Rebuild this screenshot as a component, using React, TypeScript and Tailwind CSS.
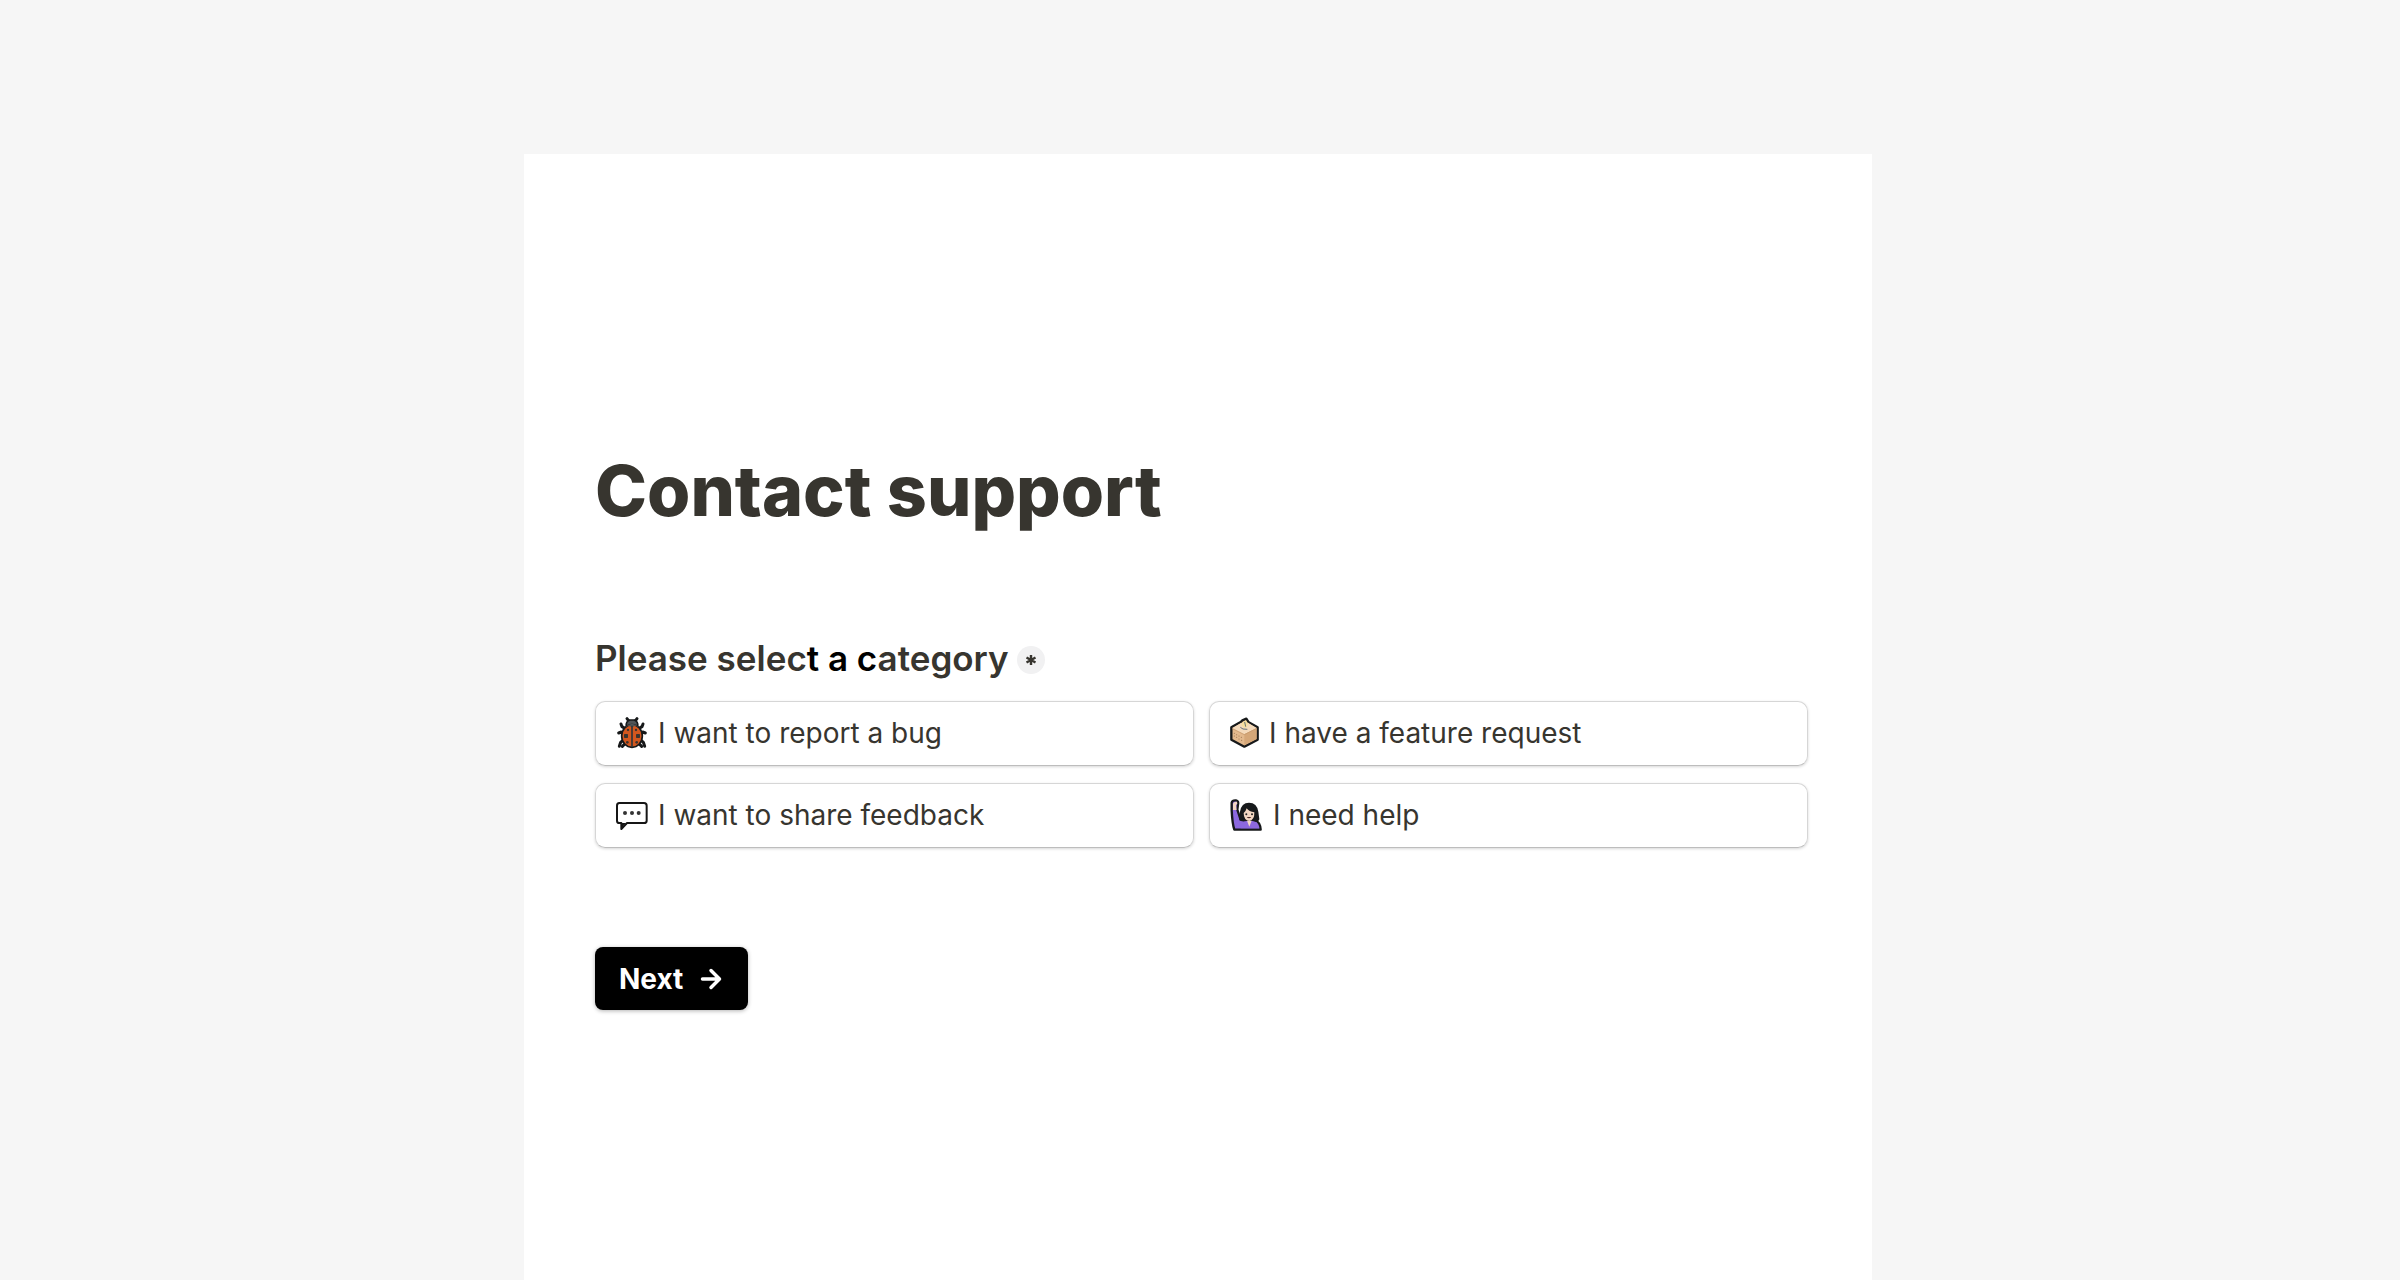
import React from 'react';

const BugIcon: React.FC = () => (
    <svg width="32" height="33" viewBox="33 36 96 99" className="shrink-0 overflow-visible" aria-hidden="true">
        <g fill="none" stroke="#17191a" strokeWidth="9" strokeLinecap="round" strokeLinejoin="round">
            <path d="M74 50 L70 46 L66 41 M88 50 L92 46 L96 41" />
            <path d="M60 70 L51 65 L48 57 M102 70 L111 65 L114 57" />
            <path d="M56 88 L49 81 L41 84 M106 88 L113 81 L121 84" />
            <path d="M56 104 L47 112 L43 124 M106 104 L115 112 L119 124" />
            <path d="M62 114 L52 124 M100 114 L110 124" />
        </g>
        <path d="M64 64 Q62 48 75 45 H87 Q100 48 98 64 Z" fill="#505557" stroke="#17191a" strokeWidth="5" />
        <ellipse cx="81" cy="93" rx="31" ry="34" fill="#d2571e" stroke="#17191a" strokeWidth="5" />
        <path d="M60 67 Q81 46 102 67 L91 62 L81 67 L71 62 Z" fill="#505557" />
        <path d="M81 62 V126" stroke="#303538" strokeWidth="5" />
        <g fill="#3a342f">
            <rect x="57" y="87" width="12" height="12" rx="2" />
            <rect x="93" y="87" width="12" height="12" rx="2" />
            <circle cx="69" cy="75" r="3.5" />
            <circle cx="93" cy="75" r="3.5" />
            <circle cx="67" cy="112" r="4" />
            <circle cx="95" cy="112" r="4" />
        </g>
    </svg>
);

const BoxIcon: React.FC = () => (
    <svg width="29" height="33" viewBox="30 36 87 99" className="shrink-0 overflow-visible" aria-hidden="true">
        <path d="M34 67 L62 51 L67 46 L79 41 L86 52 L113 67 V104 L73 125 L34 104 Z" fill="#e3b98d" stroke="#17191a" strokeWidth="7" strokeLinejoin="round" />
        <path d="M37 69 L63 54 L84 53 L110 69 L73 88 Z" fill="#f4dabb" />
        <path d="M73 88 L110 70 V102 L73 121 Z" fill="#d5a778" />
        <path d="M37 71 L73 89 L110 70" fill="none" stroke="#c2956a" strokeWidth="2" />
        <path d="M64 60 Q65 51 78 46 L84 56 Q82 69 73 68 Z" fill="#f7df9d" />
        <path d="M74 51 L77 65 M61 67 L69 72 L82 73" fill="none" stroke="#657078" strokeWidth="3" />
        <g fill="#8d6746">
            <circle cx="43" cy="85" r="1.5" />
            <circle cx="50" cy="89" r="1.5" />
            <circle cx="57" cy="93" r="1.5" />
            <circle cx="43" cy="93" r="1.5" />
            <circle cx="50" cy="97" r="1.5" />
            <circle cx="64" cy="97" r="1.5" />
            <circle cx="57" cy="102" r="1.5" />
            <circle cx="65" cy="106" r="1.5" />
        </g>
    </svg>
);

const SpeechIcon: React.FC = () => (
    <svg width="32" height="33" viewBox="33 42 96 99" className="shrink-0 overflow-visible" aria-hidden="true">
        <path d="M43 54 H117 Q125 54 125 62 V107 Q125 114 117 114 H66 L49 132 V114 H43 Q36 114 36 107 V62 Q36 54 43 54 Z" fill="#fff" stroke="#161616" strokeWidth="6" strokeLinejoin="round" />
        <path d="M49 114 H63 L49 129 Z" fill="#161616" />
        <circle cx="60" cy="84" r="6" fill="#333" />
        <circle cx="81" cy="84" r="6" fill="#333" />
        <circle cx="101" cy="84" r="6" fill="#333" />
    </svg>
);

const RaisedHandIcon: React.FC = () => (
    <svg width="33" height="33" viewBox="30 40 99 99" className="shrink-0 overflow-visible" aria-hidden="true">
        <path d="M35 74 V51 Q37 43 48 44 Q57 46 54 57 L52 72 L63 106 H108 Q121 110 122 132 H43 Q37 114 35 74 Z" fill="#8c68df" stroke="#17191a" strokeWidth="7" strokeLinejoin="round" />
        <path d="M39 73 V54 Q41 47 51 48 L52 54 L48 58 L50 73 Z" fill="#f3d5c2" />
        <path d="M59 105 Q56 94 60 78 Q64 51 87 51 Q111 51 115 78 L118 101 Q117 107 111 107 H67 Z" fill="#17191b" />
        <path d="M56 104 Q66 109 80 106 H98 L110 110 L118 128 H62 Z" fill="#8c68df" />
        <path d="M71 82 Q78 76 80 68 Q87 78 103 80 Q104 103 88 106 Q71 103 71 82 Z" fill="#f3d7c3" />
        <path d="M81 105 H95 L88 123 Z" fill="#f3d7c3" />
        <circle cx="79" cy="86" r="3" fill="#222" />
        <circle cx="96" cy="86" r="3" fill="#222" />
        <path d="M80 94 H94 Q87 102 80 94 Z" fill="#4b2926" />
    </svg>
);

const categories = [
    { value: 'bug', label: 'I want to report a bug', Icon: BugIcon },
    { value: 'feature', label: 'I have a feature request', Icon: BoxIcon },
    { value: 'feedback', label: 'I want to share feedback', Icon: SpeechIcon },
    { value: 'help', label: 'I need help', Icon: RaisedHandIcon },
];

const App: React.FC = () => {
    return (
        <div className="flex min-h-screen flex-col bg-[#f6f6f6] pt-[154px] pr-1 font-['Inter',sans-serif] text-[#37352f]">
            <main className="mx-auto w-full max-w-[1348px] grow bg-white pt-[295px] pr-16 pb-24 pl-[71px]">
                <h1 className="text-[70px] leading-[84px] font-extrabold">Contact support</h1>

                <form className="mt-[104px]" onSubmit={(e) => e.preventDefault()}>
                    <fieldset>
                        <legend className="flex items-center gap-2 text-[35px] leading-[42px] font-semibold">
                            <span>
                                Please selec<span className="text-black">t a c</span>ategory
                            </span>
                            <span className="mt-1 flex size-7 items-center justify-center rounded-full bg-[#f1f1f2]">
                                <svg width="12" height="12" viewBox="0 0 12 12" aria-hidden="true">
                                    <path d="M6 1 V11 M1.5 3.5 L10.5 8.5 M10.5 3.5 L1.5 8.5" stroke="#37352f" strokeWidth="2.4" />
                                </svg>
                            </span>
                        </legend>

                        <div className="mt-[22px] grid grid-cols-2 gap-x-[15px] gap-y-[17px]">
                            {categories.map(({ value, label, Icon }) => (
                                <label
                                    key={value}
                                    className="flex h-[65px] cursor-pointer items-center gap-[10px] rounded-[10px] border border-[#d6d6d6] border-b-[#bdbdbd] px-5 pb-px text-[28px] leading-9 shadow-[0_1px_3px_rgba(0,0,0,0.16)] has-focus-visible:outline-2"
                                >
                                    <input type="radio" name="category" value={value} className="sr-only" />
                                    <Icon />
                                    <span>{label}</span>
                                </label>
                            ))}
                        </div>
                    </fieldset>

                    <button
                        type="submit"
                        className="mt-[99px] flex h-[63px] items-center gap-[17px] rounded-lg bg-black pr-[26px] pl-6 text-[28px] leading-9 font-bold text-white shadow-[0_1px_4px_rgba(0,0,0,0.3)]"
                    >
                        Next
                        <svg width="22" height="22" viewBox="0 0 22 22" fill="none" aria-hidden="true">
                            <path d="M2.5 11 H19 M11 2.5 L19.5 11 L11 19.5" stroke="currentColor" strokeWidth="3.5" strokeLinecap="round" strokeLinejoin="round" />
                        </svg>
                    </button>
                </form>
            </main>
        </div>
    );
};

export default App;
